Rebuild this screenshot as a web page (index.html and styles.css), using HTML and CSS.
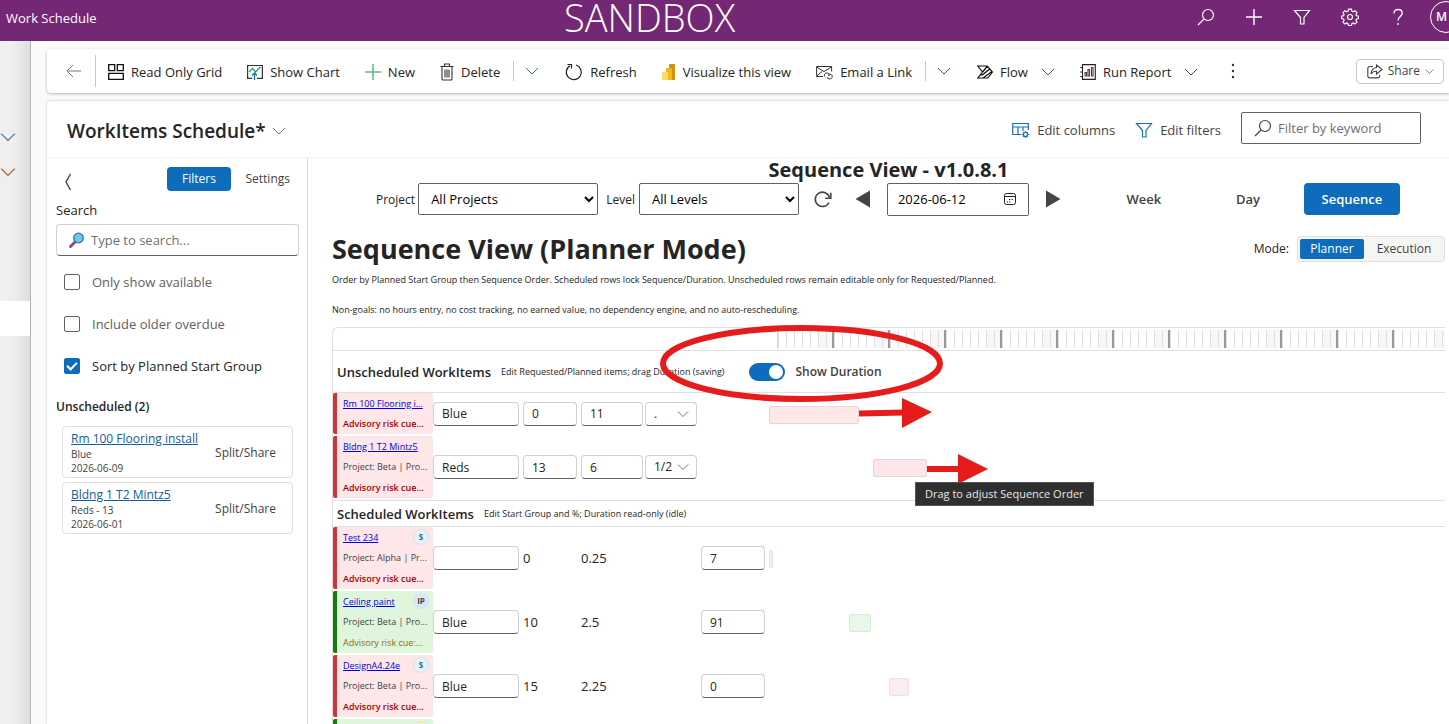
FILE: index.html
```html
<!DOCTYPE html>
<html lang="en">
<head>
<meta charset="utf-8">
<title>Work Schedule</title>
<link rel="stylesheet" href="styles.css">
</head>
<body>
<svg class="defs" width="0" height="0">
  <symbol id="chev" viewBox="0 0 14 14"><path d="M1 4l6 6 6-6" fill="none" stroke="currentColor"/></symbol>
  <symbol id="lens" viewBox="0 0 18 18"><circle cx="11" cy="7" r="5.5" fill="none" stroke="currentColor" stroke-width="1.2"/><path d="M7 11l-6 6" stroke="currentColor" stroke-width="1.2"/></symbol>
  <symbol id="funnel" viewBox="0 0 18 18"><path d="M1.5 2.5h15L11 9.500V16H7.500V9.500z" fill="none" stroke="currentColor" stroke-width="1.2"/></symbol>
</svg>
<header class="topbar">
  <span class="brand">Work Schedule</span>
  <span class="env">SANDBOX</span>
  <nav class="top-actions">
    <button aria-label="Search"><svg width="18" height="18"><use href="#lens"/></svg></button>
    <button aria-label="Add"><svg width="18" height="18"><path d="M9 1v16M1 9h16" stroke="currentColor" stroke-width="1.4"/></svg></button>
    <button aria-label="Filter"><svg width="18" height="18"><use href="#funnel"/></svg></button>
    <button aria-label="Settings"><svg width="18" height="18" viewBox="0 0 18 18" fill="none" stroke="currentColor" stroke-width="1.2"><path d="M7.500 1.200h3l.4 2 1.300.6 1.800-1.100 2 2-1.100 1.800.6 1.200 2 .5v2.300l-2 .5-.6 1.300 1.100 1.800-2 2-1.800-1.100-1.300.6-.4 2h-3l-.4-2-1.300-.6-1.800 1.100-2-2 1.100-1.800-.6-1.300-2-.5V8.200l2-.5.6-1.200L2 4.700l2-2 1.800 1.100 1.300-.6z"/><circle cx="9" cy="9" r="2.500"/></svg></button>
    <button aria-label="Help"><svg width="18" height="18" fill="none" stroke="currentColor" stroke-width="1.300"><path d="M5 5.500C5 3 6.500 1.500 9 1.500s4.200 1.500 4.200 3.800C13.200 8.500 9 8.500 9 12.500M9 15v2"/></svg></button>
    <button class="avatar" aria-label="Account">M</button>
  </nav>
</header>
<div class="shell">
  <aside class="rail">
    <button class="rail-blue" aria-label="Expand group"><svg width="16" height="18"><use href="#chev"/></svg></button>
    <button class="rail-brown" aria-label="Expand group"><svg width="16" height="18"><use href="#chev"/></svg></button>
    <div class="rail-active"></div>
  </aside>
  <div class="page">
    <div class="commands">
      <button class="back" aria-label="Back"><svg width="16" height="16" fill="none" stroke="#777"><path d="M15 8H1.500M7 2L1 8l6 6"/></svg></button>
      <button class="cmd"><svg width="16" height="16" fill="none" stroke="#111" stroke-width="1.300"><path d="M.7.700h6v6h-6zM9.300.700h6v6h-6zM.7 9.300h14.600v6H.700z"/></svg>Read Only Grid</button>
      <button class="cmd"><svg width="16" height="16" fill="none"><path d="M5 14.300H.600V1.500h14.800v12.800H10" stroke="#333" stroke-width="1.200"/><path d="M2 8l3.500-3.500L8.500 8l5-5" stroke="#2a9d55" stroke-width="1.200"/><path d="M7.500 16V9M5 11.500L7.500 9l2.500 2.500" stroke="#1f6fb5" stroke-width="1.300"/></svg>Show Chart</button>
      <button class="cmd"><svg width="16" height="16"><path d="M8 0v16M0 8h16" stroke="#5fc088" stroke-width="1.600"/></svg>New</button>
      <button class="cmd"><svg width="14" height="18" fill="none" stroke="#333" stroke-width="1.100"><path d="M.5 3.500h13M4.500 3.500v-2.500h5v2.500M2 3.500v12.500q0 1 1 1h8q1 0 1-1V3.500M5 6.500v8M7 6.500v8M9 6.500v8"/></svg>Delete</button>
      <button class="split c-blue" aria-label="More delete options"><svg width="14" height="14"><use href="#chev"/></svg></button>
      <button class="cmd"><svg width="18" height="18" fill="none" stroke="#222" stroke-width="1.200"><path d="M11 2a7.500 7.500 0 1 1-6 .7M2.500 1.500h4v4"/></svg>Refresh</button>
      <button class="cmd"><svg width="14" height="16"><rect x="7" width="6" height="16" rx="1" fill="#d68f0b"/><rect x="4" y="4" width="6" height="12" rx="1" fill="#efb921"/><rect y="8" width="6" height="8" rx="1" fill="#f6dc6a"/></svg>Visualize this view</button>
      <button class="cmd"><svg width="17" height="16" fill="none" stroke="#333" stroke-width="1"><path d="M7 12.500H.600V2.500h15v5M.6 3l7.400 4.500L15.600 3M.6 12L6 7.500"/><path d="M9.500 13q-2-1-1-2.800t3.200-1.200 1.200 3M12.500 11q1-1.500 2.700-.5t.8 3-3 1.500-1.200-1.800"/></svg>Email a Link</button>
      <button class="split c-red" aria-label="More email options"><svg width="14" height="14"><use href="#chev"/></svg></button>
      <button class="cmd"><svg width="16" height="14" fill="none" stroke="#111" stroke-width="1.200"><path d="M.8 1h9.500L15.500 7l-4.700 6H.800L5.500 7zM5.500 7L10.500 1M3.500 9.800h2L12.800 4M6 13L15 6.500"/></svg>Flow<svg class="tail c-purple" width="14" height="14"><use href="#chev"/></svg></button>
      <button class="cmd"><svg width="16" height="16" fill="none" stroke="#222" stroke-width="1.100"><path d="M2.500.6h12.800v14.800H2.500zM.3 3.500h2.200M.3 8h2.200M.3 12.500h2.200"/><path d="M5 8.500h1.500V12H5zM8 5.500h1.500V12H8zM11.500 3.500h1.500V12h-1.500z" stroke="#5f3550"/></svg>Run Report<svg class="tail c-plum" width="14" height="14"><use href="#chev"/></svg></button>
      <button class="dots" aria-label="More commands"><svg width="4" height="16" fill="#333"><circle cx="2" cy="2" r="1.200"/><circle cx="2" cy="8" r="1.200"/><circle cx="2" cy="14" r="1.200"/></svg></button>
      <button class="share"><svg width="16" height="15" fill="none" stroke="#444" stroke-width="1.100"><path d="M6 2.500H3q-2.200 0-2.200 2.200v7q0 2.200 2.200 2.200h7.500q2.200 0 2.200-2.200V11"/><path d="M9.500 1l5.500 4.500L9.500 10V7.300Q6 7 4 10q.5-6 5.500-6.500z"/></svg>Share<svg width="9" height="9"><use href="#chev"/></svg></button>
    </div>
    <section class="view">
      <div class="view-head">
        <button class="view-name">WorkItems Schedule*<svg width="14" height="14"><use href="#chev"/></svg></button>
        <button class="edit edit-first"><svg width="18" height="16" fill="none" stroke="#1a6fb8" stroke-width="1.200"><path d="M9 12.500H.700V1.500h15.600V8M.7 5h15.600M6 5v7.500M11 5v4"/><circle cx="13.500" cy="12.500" r="2" /><path d="M13.500 9v1.500M13.500 14.500V16M10 12.500h1.500M15.500 12.500H17M11.200 10.200l.9.900M15 14l.9.900M15.900 10.200l-.9.900M11.200 14.900l.9-.9"/></svg>Edit columns</button>
        <button class="edit"><svg class="c-link" width="18" height="18"><use href="#funnel"/></svg>Edit filters</button>
        <label class="keyword"><svg width="18" height="18"><use href="#lens"/></svg><input type="text" placeholder="Filter by keyword" aria-label="Filter by keyword"></label>
      </div>
      <div class="body">
        <aside class="side">
          <div class="side-tabs">
            <button class="collapse" aria-label="Collapse"><svg width="8" height="18" fill="none" stroke="#444" stroke-width="1.400"><path d="M6.500 1L2 9l4.500 8"/></svg></button>
            <button class="tab tab-on">Filters</button>
            <button class="tab">Settings</button>
          </div>
          <label class="side-label" for="search">Search</label>
          <div class="search">
            <svg width="16" height="16"><path d="M1.500 14.500L6 10" stroke="#8a4a8f" stroke-width="3" stroke-linecap="round"/><circle cx="9.500" cy="6" r="4.800" fill="#62cdee" stroke="#3b6d9f" stroke-width="1.300"/></svg>
            <input id="search" type="text" placeholder="Type to search...">
          </div>
          <label class="check"><input type="checkbox">Only show available</label>
          <label class="check"><input type="checkbox">Include older overdue</label>
          <label class="check check-on"><input type="checkbox" checked>Sort by Planned Start Group</label>
          <h3 class="side-title">Unscheduled (2)</h3>
          <ul class="cards">
            <li class="card"><div><a href="#">Rm 100 Flooring install</a><p>Blue</p><p>2026-06-09</p></div><button>Split/Share</button></li>
            <li class="card"><div><a href="#">Bldng 1 T2 Mintz5</a><p>Reds - 13</p><p>2026-06-01</p></div><button>Split/Share</button></li>
          </ul>
        </aside>
        <main class="main">
          <h2 class="app-title">Sequence View - v1.0.8.1</h2>
          <div class="controls">
            <label for="project">Project</label>
            <select id="project" class="sel-project"><option>All Projects</option></select>
            <label for="level">Level</label>
            <select id="level" class="sel-level"><option>All Levels</option></select>
            <button class="ctl" aria-label="Reload"><svg width="20" height="20" fill="none" stroke="#444" stroke-width="1.600"><path d="M16.500 8.500A7.200 7.200 0 1 0 16 13.500"/><path d="M17.800 3.800v5.500h-5.500"/></svg></button>
            <button class="ctl ctl-prev" aria-label="Previous"><svg width="16" height="18"><path d="M15 .5v17L.5 9z" fill="#444"/></svg></button>
            <div class="date"><input type="text" value="2026-06-12" aria-label="Date"><svg width="14" height="14" fill="none" stroke="#222"><rect x="1.500" y="1.500" width="11" height="11" rx="2"/><path d="M1.500 4.500h11M6 7.500h1.300M8.500 7.500h1.300M3.700 10h1.300M6 10h1.300"/></svg></div>
            <button class="ctl ctl-next" aria-label="Next"><svg width="16" height="18"><path d="M1 .5v17L15.500 9z" fill="#444"/></svg></button>
            <button class="range range-week">Week</button>
            <button class="range">Day</button>
            <button class="range range-on">Sequence</button>
          </div>
          <div class="heading">
            <h1>Sequence View (Planner Mode)</h1>
            <span class="mode-label">Mode:</span>
            <div class="segmented"><button class="seg seg-on">Planner</button><button class="seg">Execution</button></div>
          </div>
          <p class="note">Order by Planned Start Group then Sequence Order. Scheduled rows lock Sequence/Duration. Unscheduled rows remain editable only for Requested/Planned.</p>
          <p class="note">Non-goals: no hours entry, no cost tracking, no earned value, no dependency engine, and no auto-rescheduling.</p>
          <div class="board">
            <div class="scale"><div class="ticks"></div></div>
            <div class="group group-tall">
              <h2>Unscheduled WorkItems</h2><span class="hint">Edit Requested/Planned items; drag Duration (saving)</span>
              <label class="toggle"><input type="checkbox" role="switch" checked>Show Duration</label>
            </div>
            <div class="row">
              <div class="item red"><div class="item-head"><a href="#">Rm 100 Flooring i...</a></div><p class="risk">Advisory risk cue...</p></div>
              <input class="f-group" value="Blue" aria-label="Start group"><input class="f-seq" value="0" aria-label="Sequence"><input class="f-dur" value="11" aria-label="Duration">
              <div class="pick"><select aria-label="Fraction"><option>.</option></select><svg width="12" height="12"><use href="#chev"/></svg></div>
              <div class="track"><div class="bar bar-red" style="margin-left:0;width:90px"></div></div>
            </div>
            <div class="row">
              <div class="item red"><div class="item-head"><a href="#">Bldng 1 T2 Mintz5</a></div><p>Project: Beta | Pro...</p><p class="risk">Advisory risk cue...</p></div>
              <input class="f-group" value="Reds" aria-label="Start group"><input class="f-seq" value="13" aria-label="Sequence"><input class="f-dur" value="6" aria-label="Duration">
              <div class="pick"><select aria-label="Fraction"><option>1/2</option></select><svg width="12" height="12"><use href="#chev"/></svg></div>
              <div class="track"><div class="bar bar-red" style="margin-left:104px;width:54px"></div></div>
            </div>
            <div class="group">
              <h2>Scheduled WorkItems</h2><span class="hint">Edit Start Group and %; Duration read-only (idle)</span>
            </div>
            <div class="row">
              <div class="item red"><div class="item-head"><a href="#">Test 234</a><span class="badge">S</span></div><p>Project: Alpha | Pr...</p><p class="risk">Advisory risk cue...</p></div>
              <input class="f-group" value="" aria-label="Start group"><span>0</span><span>0.25</span>
              <input class="f-pct" value="7" aria-label="Percent">
              <div class="track"><div class="bar bar-faint" style="margin-left:0;width:4px"></div></div>
            </div>
            <div class="row">
              <div class="item green"><div class="item-head"><a href="#">Ceiling paint</a><span class="badge badge-ip">IP</span></div><p>Project: Beta | Pro...</p><p class="warn">Advisory risk cue:...</p></div>
              <input class="f-group" value="Blue" aria-label="Start group"><span>10</span><span>2.5</span>
              <input class="f-pct" value="91" aria-label="Percent">
              <div class="track"><div class="bar bar-green" style="margin-left:80px;width:22px"></div></div>
            </div>
            <div class="row">
              <div class="item red"><div class="item-head"><a href="#">DesignA4.24e</a><span class="badge">S</span></div><p>Project: Beta | Pro...</p><p class="risk">Advisory risk cue...</p></div>
              <input class="f-group" value="Blue" aria-label="Start group"><span>15</span><span>2.25</span>
              <input class="f-pct" value="0" aria-label="Percent">
              <div class="track"><div class="bar bar-faint" style="margin-left:120px;width:20px"></div></div>
            </div>
            <div class="row"><div class="item green"><div class="item-head"><span class="badge badge-hold"></span></div></div></div>
            <svg class="marks" width="340" height="170" viewBox="655 320 340 170">
              <g fill="none" stroke="#e61c1c" stroke-width="6"><ellipse cx="801.500" cy="363.500" rx="138.500" ry="35.500"/><path d="M859 413.500L904 412.500M927 469H960"/></g>
              <path d="M902 398v30l30-16zM958 454v30l30-15z" fill="#e61c1c"/>
            </svg>
            <div class="tip" role="tooltip">Drag to adjust Sequence Order</div>
          </div>
        </main>
      </div>
    </section>
  </div>
</div>
</body>
</html>
```

FILE: styles.css
```css
* { box-sizing: border-box; }
body {
  margin: 0;
  height: 100vh;
  overflow: hidden;
  display: flex;
  flex-direction: column;
  background: #fafafa;
  color: #242424;
  font-family: "Open Sans", "Noto Sans", sans-serif;
  font-size: 13px;
  line-height: 20px;
}
.defs { position: absolute; }
h1, h2, h3, p, ul { margin: 0; padding: 0; }
button, input, select { font: inherit; color: inherit; }
button { background: none; border: 0; padding: 0; white-space: nowrap; }
svg { flex: none; }
.c-blue { color: #2a6fa8; }
.c-red { color: #a4373a; }
.c-purple { color: #4b4a8a; }
.c-plum { color: #7a3558; }
.c-link { color: #1a6fb8; }

.topbar {
  flex: none;
  display: flex;
  height: 41px;
  background: #742774;
  color: #fff;
}
.brand { width: 564px; padding: 8px 6px; }
.env { font-size: 38px; font-weight: 300; line-height: 34px; }
.top-actions { display: flex; margin: 0 -13px 0 auto; align-items: center; height: 34px; }
.top-actions button { width: 48px; display: flex; justify-content: center; }
.top-actions .avatar {
  width: 32px;
  height: 32px;
  margin-left: 8px;
  padding-left: 5px;
  align-items: center;
  justify-content: flex-start;
  border: 1px solid #fff;
  border-radius: 50%;
  font-size: 12px;
  font-weight: 600;
}

.shell { flex: 1; min-height: 0; display: flex; }
.rail {
  flex: none;
  width: 31px;
  padding-top: 87px;
  border-right: 1px solid #b3b3b3;
  background: linear-gradient(90deg, #efefef 40%, #dedede);
}
.rail button { display: flex; height: 18px; margin-bottom: 17px; }
.rail-blue { color: #3a78b0; }
.rail-brown { color: #a5602a; }
.rail-active { height: 35px; margin-top: 103px; background: #fff; }
.rail .rail-brown { margin-bottom: 120px; }
.rail-brown + .rail-active { margin-top: 0; }
.page { flex: 1; min-width: 0; padding: 8px 0 0 16px; display: flex; flex-direction: column; gap: 8px; }

.commands {
  flex: none;
  display: flex;
  align-items: center;
  height: 44px;
  padding: 0 5px 0 19px;
  background: #fff;
  border-radius: 4px 0 0 4px;
  box-shadow: 0 1px 3px rgba(0, 0, 0, .28);
}
.back { display: flex; align-items: center; height: 32px; padding-right: 13px; border-right: 1px solid #c8c8c8; }
.cmd { display: flex; align-items: center; gap: 7px; margin-left: 12px; margin-right: 13px; padding-top: 1px; }
.split { display: flex; align-items: center; height: 20px; padding: 0 14px 0 11px; border-left: 1px solid #c8c8c8; }
.tail { margin-left: 6px; }
.dots { display: flex; margin-left: 20px; }
.share {
  display: flex;
  align-items: center;
  gap: 5px;
  height: 25px;
  margin-left: auto;
  padding: 0 9px 0 10px;
  border: 1px solid #c8c8c8;
  border-radius: 4px;
  font-size: 12px;
  color: #424242;
}

.view {
  flex: 1;
  min-height: 0;
  display: flex;
  flex-direction: column;
  background: #fff;
  border-radius: 4px 0 0 0;
  box-shadow: 0 0 3px rgba(0, 0, 0, .2);
}
.view-head { flex: none; display: flex; align-items: center; height: 57px; padding: 0 28px 0 20px; border-bottom: 1px solid #f3f3f3; }
.view-name { display: flex; align-items: center; gap: 6px; padding-top: 4px; font-size: 19px; font-weight: 600; }
.view-name svg { color: #5a7d9c; }
.edit { display: flex; align-items: center; gap: 7px; margin-right: 20px; padding-top: 2px; color: #424242; }
.edit-first { margin-left: auto; }
.keyword { display: flex; align-items: center; gap: 6px; width: 180px; height: 32px; margin-bottom: 2px; padding: 0 12px; border: 1px solid #616161; border-radius: 2px; color: #424242; }
input::placeholder { color: #707070; opacity: 1; }
.keyword input, .search input { flex: 1; min-width: 0; padding: 0; border: 0; background: none; outline: 0; }

.body { flex: 1; min-height: 0; display: flex; }
.side { flex: none; width: 261px; padding: 8px 8px 0 9px; border-right: 1px solid #d8d8d8; }
.side-tabs { display: flex; align-items: center; height: 25px; }
.collapse { display: flex; margin: 6px auto 0 8px; }
.tab { height: 24px; padding: 0 9px 0 10px; font-size: 12px; color: #424242; }
.tab-on { width: 64px; margin-right: 5px; border-radius: 4px; background: #0f6cbd; color: #fff; }
.side-label { display: block; margin: 9px 0 4px; }
.search { display: flex; align-items: center; gap: 6px; height: 32px; padding: 0 12px; border: 1px solid #d1d1d1; border-bottom-color: #616161; border-radius: 4px; }
.check { display: flex; align-items: center; gap: 12px; height: 42px; padding-left: 8px; color: #616161; }
.search + .check { margin-top: 5px; }
.check-on { color: #242424; }
.check input {
  appearance: none;
  flex: none;
  display: grid;
  place-items: center;
  width: 16px;
  height: 16px;
  margin: 0;
  border: 1px solid #616161;
  border-radius: 2px;
}
.check input:checked { background: #0f6cbd; border-color: #0f6cbd; }
.check input:checked::after { content: ""; width: 8px; height: 4px; border: solid #fff; border-width: 0 0 2px 2px; transform: translateY(-1px) rotate(-45deg); }
.side-title { margin-top: 10px; font-size: 12px; font-weight: 600; line-height: 20px; }
.cards { display: grid; gap: 4px; margin: 9px 6px 0; list-style: none; }
.card { display: flex; align-items: center; justify-content: space-between; padding: 4px 16px 2px 8px; border: 1px solid #e0e0e0; border-radius: 4px; color: #424242; }
.card a { display: block; color: #115ea3; font-size: 12px; line-height: 16px; }
.card p { font-size: 10px; line-height: 14px; }
.card button { font-size: 12px; }

.main { flex: 1; min-width: 0; padding: 1px 4px 0 24px; overflow: hidden; }
.app-title { margin: 0; text-align: center; font-size: 20px; font-weight: 700; line-height: 22px; }
.controls { display: flex; align-items: center; height: 36px; padding-left: 44px; font-size: 13px; }
.controls label { font-size: 12px; padding-top: 1px; }
.controls select { height: 32px; padding: 0 8px; border: 1px solid #616161; border-radius: 2px; background: #fff; color: #000; }
.sel-project { width: 180px; margin: 0 8px 0 3px; }
.sel-level { width: 160px; margin: 0 14px 0 4px; }
.ctl { display: flex; }
.ctl-prev { margin-left: 22px; }
.ctl-next { margin-left: 16px; margin-right: 49px; }
.date { display: flex; align-items: center; width: 142px; height: 33px; margin-left: 16px; padding: 0 11px 0 10px; border: 1px solid #616161; border-radius: 2px; color: #000; }
.date input { flex: 1; min-width: 0; border: 0; padding: 0; outline: 0; }
.range { width: 68px; height: 32px; margin-right: 22px; font-weight: 600; color: #424242; }
.range-week { margin-right: 36px; }
.range-on { width: 96px; margin-right: 0; border-radius: 4px; background: #0f6cbd; color: #fff; }
.heading { display: flex; align-items: center; height: 46px; margin-top: 9px; }
.heading h1 { flex: 1; font-size: 27px; font-weight: 700; line-height: 36px; }
.mode-label { font-size: 12px; margin-right: 8px; }
.segmented { display: flex; gap: 2px; padding: 2px; height: 26px; border: 1px solid #e0e0e0; border-radius: 4px; background: #f5f5f5; }
.seg { height: 20px; width: 76px; font-size: 12px; line-height: 20px; color: #424242; }
.seg-on { width: 64px; border-radius: 2px; background: #0f6cbd; color: #fff; }
.note { height: 30px; font-size: 9px; line-height: 16px; white-space: nowrap; color: #242424; }
.note + .note { height: 25px; }

.board { position: relative; border: 1px solid #e0e0e0; border-width: 1px 0 0 1px; border-radius: 6px 0 0 0; }
.scale { height: 23px; padding: 2px 0 2px 444px; border-bottom: 1px solid #e0e0e0; }
.ticks {
  height: 18px;
  border-left: 1px solid #d0d0d0;
  background:
    repeating-linear-gradient(90deg, transparent 0 54px, #999 54px 56px),
    repeating-linear-gradient(90deg, #e0e0e0 0 1px, transparent 1px 8px),
    repeating-linear-gradient(90deg, #fff 0 40px, #f7f7f7 40px 56px);
}
.group { display: flex; align-items: center; height: 26px; padding-left: 4px; border-bottom: 1px solid #e0e0e0; white-space: nowrap; }
.row + .group { border-top: 1px solid #e0e0e0; height: 27px; }
.group-tall { height: 42px; }
.group h2 { font-size: 13px; font-weight: 600; line-height: 20px; }
.hint { margin-left: 10px; font-size: 9px; color: #242424; }
.toggle { display: flex; align-items: center; gap: 11px; margin-left: 24px; font-size: 12px; font-weight: 600; color: #424242; }
.toggle input { appearance: none; display: flex; width: 36px; height: 18px; margin: 0; padding: 2px; border-radius: 9px; background: #0f6cbd; justify-content: flex-end; }
.toggle input::after { content: ""; width: 14px; height: 14px; border-radius: 50%; background: #fff; }

.row { display: grid; grid-template-columns: 100px 90px 58px 64px 56px 68px 1fr; align-items: center; margin-bottom: 2px; color: #242424; }
.item { padding: 0 0 0 6px; border-left: 4px solid; border-radius: 2px; font-size: 9px; line-height: 21px; white-space: nowrap; }
.red { background: #fde7e9; border-color: #d13438; }
.green { background: #dff6dd; border-color: #107c10; }
.item p { height: 21px; color: #424242; }
.item a { color: #00e; }
.item-head { display: flex; align-items: center; justify-content: space-between; height: 20px; padding-right: 4px; }
.item .risk { color: #a80000; font-weight: 600; }
.item .warn { color: #8a6d1b; }
.badge { flex: none; width: 16px; height: 16px; border: 1px solid #d9e1ea; border-radius: 50%; background: #e6f1fb; color: #2b5c85; font-size: 8px; font-weight: 700; line-height: 14px; text-align: center; }
.badge-ip { background: #dbe8fa; color: #444; }
.badge-hold { margin-left: auto; background: #fdf0c0; }
.row input, .pick select { height: 24px; min-width: 0; padding: 0 8px; border: 1px solid #d1d1d1; border-bottom-color: #616161; border-radius: 4px; background: #fff; outline: 0; font-size: 12px; }
.f-group { width: 86px; }
.f-seq { width: 54px; }
.f-dur { width: 62px; }
.row .f-pct { width: 64px; grid-column: 6; }
.pick { position: relative; width: 52px; }
.pick select { appearance: none; width: 52px; padding-right: 24px; }
.pick svg { position: absolute; right: 8px; top: 6px; color: #616161; pointer-events: none; }
.track { grid-column: 7; padding-top: 2px; }
.bar { height: 18px; border: 1px solid #e0d8d9; border-radius: 2px; }
.bar-red { background: #fde7e9; }
.bar-faint { background: #fbeced; border-color: #eee0e1; }
.bar-green { background: #e8f7e7; border-color: #d9e8d8; }

.marks { position: absolute; left: 322px; top: -8px; pointer-events: none; }
.tip { position: absolute; left: 582px; top: 154px; height: 24px; padding: 0 9px; border: 1px solid #555; background: #2f2f2f; color: #e8e8e8; font-size: 11px; line-height: 22px; white-space: nowrap; }
```
